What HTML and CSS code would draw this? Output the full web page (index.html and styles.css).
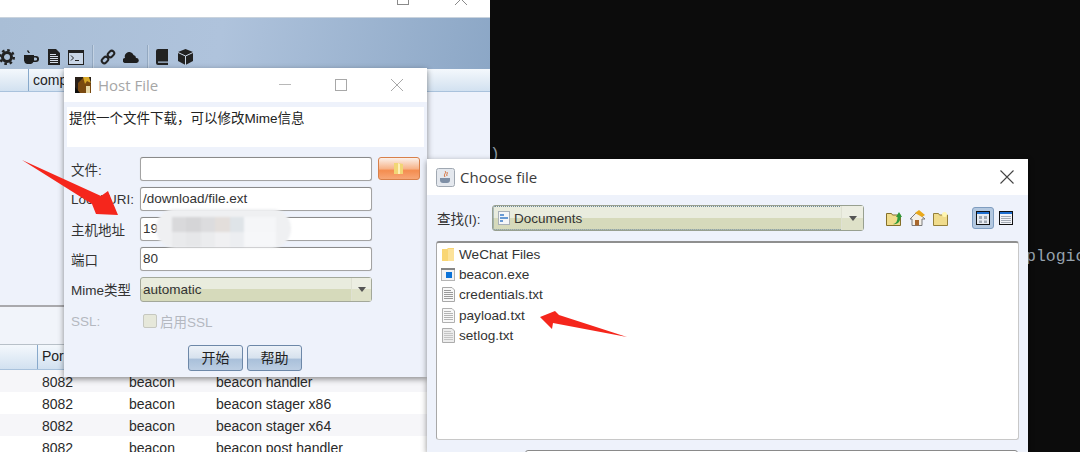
FILE: index.html
```html
<!DOCTYPE html>
<html lang="en">
<head>
    <meta charset="UTF-8">
    <title>Host File</title>
    <link rel="stylesheet" href="styles.css">
</head>
<body>

<div class="desktop">

    <!-- terminal behind everything -->
    <div class="terminal">
        <span class="term-brace">)</span>
        <span class="term-text">plogic</span>
    </div>

    <!-- main client window -->
    <div class="main-win">
        <div class="main-title">
            <svg class="wc-max" width="12" height="12" viewBox="0 0 12 12"><rect x="0.5" y="0.5" width="11" height="11" fill="none" stroke="#8a8a8a"/></svg>
            <svg class="wc-close" width="12" height="12" viewBox="0 0 12 12"><path d="M0 0L12 12M12 0L0 12" stroke="#8a8a8a"/></svg>
        </div>
        <div class="main-toolbar">
            <svg class="tool" width="16" height="16" viewBox="0 0 16 16"><circle cx="8" cy="8" r="4.500" fill="none" stroke="#222" stroke-width="3"/><circle cx="8" cy="8" r="6.800" fill="none" stroke="#222" stroke-width="2.400" stroke-dasharray="2.600 2.740"/></svg>
            <svg class="tool" width="16" height="16" viewBox="0 0 16 16"><path d="M1 6h10v1h2a2.400 2.400 0 0 1 0 6h-2.600a4 4 0 0 1-2.400 2H4a4 4 0 0 1-3-3.500zM11 8.500v3h1.600a1.500 1.500 0 0 0 0-3zM5 1l2 3H5.500L4 2z" fill="#1e1e1e"/></svg>
            <svg class="tool" width="13" height="16" viewBox="0 0 13 16"><path d="M1 0h8l4 4v12H1z" fill="#222"/><path d="M3 5.500h6M3 7.500h8M3 9.500h8M3 11.500h8M3 13.500h8" stroke="#d5dde8"/></svg>
            <svg class="tool" width="16" height="15" viewBox="0 0 16 15"><rect x="0.500" y="0.500" width="15" height="14" fill="#c9d6e6" stroke="#222"/><path d="M0 2h16" stroke="#222" stroke-width="2"/><path d="M3 5.500l2.500 2.500L3 10.500M7 10.500h4" stroke="#222" fill="none"/></svg>
            <span class="tool-sep"></span>
            <svg class="tool tool-link" width="16" height="16" viewBox="0 0 16 16"><g fill="none" stroke="#222" stroke-width="2"><rect x="-3.500" y="-2.500" width="7" height="5" rx="2.500" transform="translate(5 11) rotate(-45)"/><rect x="-3.500" y="-2.500" width="7" height="5" rx="2.500" transform="translate(11 5) rotate(-45)"/></g></svg>
            <svg class="tool tool-cloud" width="16" height="11" viewBox="0 0 16 11"><path d="M2.500 11a2.500 2.500 0 0 1-.500-5A4.500 4.500 0 0 1 10.500 3 3 3 0 0 1 13 6a2.500 2.500 0 0 1 .500 5z" fill="#1e1e1e"/></svg>
            <span class="tool-sep"></span>
            <svg class="tool" width="12" height="16" viewBox="0 0 12 16"><path d="M0 2a2 2 0 0 1 2-2h10v12.500H2v1.200h10V16H2a2 2 0 0 1-2-2z" fill="#222"/></svg>
            <svg class="tool tool-cube" width="15" height="16" viewBox="0 0 15 16"><path d="M7.500 0L15 3v9l-7.500 4L0 12V3z" fill="#222"/><path d="M0 3.500l7.500 3.500L15 3.500M7.500 7v9" stroke="#c9d6e6" fill="none"/></svg>
        </div>
        <div class="tbl-head top-head">
            <span class="th th-first"></span>
            <span class="th">comp</span>
        </div>
        <div class="upper-body"></div>
        <div class="tab-strip"></div>
        <div class="tbl-head low-head">
            <span class="th th-blank"></span>
            <span class="th">Por</span>
        </div>
        <div class="row"><span class="c-port">8082</span><span class="c-pay">beacon</span><span>beacon handler</span></div>
        <div class="row alt"><span class="c-port">8082</span><span class="c-pay">beacon</span><span>beacon stager x86</span></div>
        <div class="row"><span class="c-port">8082</span><span class="c-pay">beacon</span><span>beacon stager x64</span></div>
        <div class="row alt"><span class="c-port">8082</span><span class="c-pay">beacon</span><span>beacon post handler</span></div>
    </div>

    <!-- host file dialog -->
    <div class="dlg host-dlg">
        <div class="dlg-title host-title">
            <svg class="host-icon" width="16" height="16" viewBox="0 0 16 16"><rect width="16" height="16" fill="#2a2018"/><path d="M3 16V6l5-5 5 1 3 5v9z" fill="#7a4a10"/><path d="M8 0h6l2 6-4-2-2 3z" fill="#d8a828"/><path d="M11 9h4v7h-4z" fill="#e8d8a8"/><path d="M0 10l5 6H0z" fill="#0c0c0c"/></svg>
            <span class="host-name">Host File</span>
            <div class="win-btns">
                <svg width="12" height="12" viewBox="0 0 12 12"><path d="M0 5.500h12" stroke="#b8b8b8"/></svg>
                <svg width="12" height="12" viewBox="0 0 12 12"><rect x="0.500" y="0.500" width="11" height="11" fill="none" stroke="#a8a8a8"/></svg>
                <svg width="12" height="12" viewBox="0 0 12 12"><path d="M0 0L12 12M12 0L0 12" stroke="#a8a8a8"/></svg>
            </div>
        </div>
        <div class="host-body">
            <div class="info">提供一个文件下载，可以修改Mime信息</div>
            <div class="form">
                <label>文件:</label>
                <div class="field-wrap">
                    <span class="field"></span>
                    <span class="browse">
                        <svg width="12" height="11" viewBox="0 0 12 11"><path d="M1 0h4l5 1v10H1z" fill="#f2d675"/><path d="M5 0v11h2V1z" fill="#fff0b8"/></svg>
                    </span>
                </div>
                <label>Local URI:</label>
                <span class="field">/download/file.ext</span>
                <label>主机地址</label>
                <span class="field">19</span>
                <label>端口</label>
                <span class="field">80</span>
                <label>Mime类型</label>
                <span class="combo combo-small">automatic<span class="combo-btn"><i class="caret"></i></span></span>
                <label class="off ssl">SSL:</label>
                <span class="check-line off ssl"><i class="check"></i>启用SSL</span>
            </div>
            <div class="btn-row">
                <span class="btn">开始</span>
                <span class="btn">帮助</span>
            </div>
        </div>
    </div>

    <!-- blur that hides the host address -->
    <div class="smudge"></div>

    <!-- file chooser -->
    <div class="dlg choose-dlg">
        <div class="dlg-title choose-title">
            <svg width="19" height="19" viewBox="0 0 19 19"><rect x="0.500" y="0.500" width="18" height="18" rx="2" fill="#e4e8ee" stroke="#a0a8b2"/><path d="M9 3c2 2-2 3 0 6M11 4c1 2-1 2 0 4" stroke="#d8703a" fill="none"/><path d="M4 10h10v2a3 3 0 0 1-3 3H7a3 3 0 0 1-3-3z" fill="#7e8fa6"/></svg>
            <span class="choose-name">Choose file</span>
            <svg class="choose-close" width="14" height="14" viewBox="0 0 14 14"><path d="M0.500 0.500L13.500 13.500M13.500 0.500L0.500 13.500" stroke="#444" stroke-width="1.100"/></svg>
        </div>
        <div class="choose-body">
            <div class="look-row">
                <span class="look-label">查找(I):</span>
                <span class="combo combo-big">
                    <svg class="doc-ico" width="12" height="14" viewBox="0 0 12 14"><rect x="0.500" y="0.500" width="11" height="13" fill="#f4f6f8" stroke="#a8b0b8"/><path d="M2 4h4M2 7h8M2 10h3" stroke="#3a7cc8" stroke-width="1.500"/></svg>
                    Documents
                    <span class="combo-btn big-btn"><i class="caret"></i></span>
                </span>
                <div class="tools">
                    <svg width="16" height="15" viewBox="0 0 16 15"><path d="M.5 2.500h5l1 1.500h8v10.500H.5z" fill="#f0dc8c" stroke="#84702a"/><path d="M7 13c3.500-.500 4.500-3.500 4.500-7H10l3-5 3 5h-1.500c0 4.500-3 8-7.500 7z" fill="#2f9a3a"/></svg>
                    <svg width="17" height="16" viewBox="0 0 17 16"><path d="M8 2L1 9h2v6.500h10V9h3z" fill="#f4f0e8" stroke="#7a7a7a"/><path d="M6 3l4-3 6 5-3 2z" fill="#eaa91c"/><rect x="6" y="10" width="4" height="5.500" fill="#a8672c"/></svg>
                    <svg width="15" height="15" viewBox="0 0 15 15"><path d="M.5 2.500h5l1 1.500h8v10.500H.5z" fill="#f0dc8c" stroke="#94803a"/><circle cx="11.500" cy="3.500" r="2.500" fill="#fff6b0"/></svg>
                    <span class="view-on">
                        <svg width="14" height="14" viewBox="0 0 14 14"><rect x="0.500" y="0.500" width="13" height="13" fill="#e8ecf2" stroke="#111"/><rect x="1" y="1" width="12" height="2" fill="#1f6fd0"/><path d="M3 5h3v3H3zM8 5h3v3H8zM3 9.500h3v2.500H3zM8 9.500h3v2.500H8z" fill="#a2aab4"/></svg>
                    </span>
                    <svg class="view-list" width="14" height="14" viewBox="0 0 14 14"><rect x="0.500" y="0.500" width="13" height="13" fill="#f2f4f8" stroke="#111"/><rect x="1" y="1" width="12" height="2" fill="#1f6fd0"/><path d="M2 5.500h10M2 7.500h10M2 9.500h10M2 11.500h10" stroke="#a4abb4"/></svg>
                </div>
            </div>
            <div class="file-list">
                <div class="file"><svg class="ico-dir" width="14" height="13" viewBox="0 0 14 13"><path d="M1 1h5l1-1h6v13H1z" fill="#f9d675"/><path d="M7 1h6v12H7z" fill="#fce29a"/></svg>WeChat Files</div>
                <div class="file"><svg width="14" height="13" viewBox="0 0 14 13"><rect x="0.500" y="0.500" width="13" height="12" fill="#f2f2f4" stroke="#b4b4b4"/><rect x="0" y="0" width="14" height="2" fill="#868686"/><rect x="5" y="4" width="6" height="6" fill="#0b72d8"/></svg>beacon.exe</div>
                <div class="file"><svg width="14" height="15" viewBox="0 0 14 15"><path d="M1.500 .5H11L13.500 3V14.500H1.500z" fill="#f8f8f8" stroke="#a8a8a8"/><path d="M3 3.500h7M3 5.500h9M3 7.500h9M3 9.500h9M3 11.500h9" stroke="#9a9a9a"/></svg>credentials.txt</div>
                <div class="file"><svg width="14" height="15" viewBox="0 0 14 15"><path d="M1.500 .5H11L13.500 3V14.500H1.500z" fill="#f8f8f8" stroke="#b0b0b0"/><path d="M3 3.500h7M3 5.500h9M3 7.500h9M3 9.500h9M3 11.500h9" stroke="#b4b4b4"/></svg>payload.txt</div>
                <div class="file"><svg width="14" height="15" viewBox="0 0 14 15"><path d="M1.500 .5H11L13.500 3V14.500H1.500z" fill="#ececec" stroke="#acacac"/><path d="M3 3.500h7M3 5.500h9M3 7.500h9M3 9.500h9M3 11.500h9" stroke="#c4c4c4"/></svg>setlog.txt</div>
            </div>
            <div class="name-field"></div>
        </div>
    </div>

    <!-- red arrows drawn over the screenshot -->
    <svg class="arrows" width="1080" height="452" viewBox="0 0 1080 452">
        <path d="M22 160L101 196 108 191 118 215 96 214 92 204z" fill="#f5261c"/>
        <path d="M540 317L555 311 559 315 627 337 553 323 552 329z" fill="#f5261c"/>
    </svg>

</div>

</body>
</html>
```

FILE: styles.css
```css
* {
    box-sizing: border-box;
}

html, body {
    margin: 0;
    padding: 0;
}

body {
    font-family: "Liberation Sans", "Noto Sans CJK SC", sans-serif;
    font-size: 14px;
    color: #222;
}

.desktop {
    position: relative;
    width: 1080px;
    height: 452px;
    overflow: hidden;
    background: #0c0c0c;
}

/* terminal */
.term-brace {
    position: absolute;
    left: 490px;
    top: 146px;
    font-family: "Liberation Mono", monospace;
    font-size: 16px;
    color: #8d99a3;
}

.term-text {
    position: absolute;
    left: 1026px;
    top: 247px;
    font-family: "Liberation Mono", monospace;
    font-size: 16.500px;
    color: #97a3ae;
}

/* main window */
.main-win {
    position: absolute;
    left: 0;
    top: 0;
    width: 490px;
    height: 452px;
    background: #eef2fb;
    display: flex;
    flex-direction: column;
}

.main-title {
    height: 18px;
    flex: none;
    background: #fff;
    border-bottom: 1px solid #c9d3dd;
    position: relative;
    overflow: hidden;
}

.wc-max {
    position: absolute;
    left: 397px;
    top: -7px;
}

.wc-close {
    position: absolute;
    left: 455px;
    top: -7px;
}

.main-toolbar {
    height: 51px;
    flex: none;
    background: linear-gradient(100deg, #a9bed6 0%, #afc3dc 45%, #8ca7c6 100%);
    display: flex;
    align-items: center;
    gap: 8px;
    padding: 27px 0 0 0;
    margin-left: -1px;
}

.tool {
    flex: none;
}

.tool-link, .tool-cloud {
    margin-left: -1px;
}

.tool-cube {
    margin-left: 2px;
}

.tool-sep {
    width: 1px;
    height: 24px;
    background: #93a8c0;
    box-shadow: 1px 0 0 #c3d2e3;
}

.tbl-head {
    flex: none;
    height: 23px;
    display: flex;
    background: linear-gradient(#f4f8fc, #d2e1f0);
    border-bottom: 1px solid #a9c2dc;
    font-size: 14px;
    line-height: 22px;
}

.th {
    padding-left: 4px;
    border-left: 1px solid #88a9cb;
    flex: 1;
}

.th-first {
    flex: none;
    width: 28px;
    border-left: 0;
}

.th-blank {
    flex: none;
    width: 37px;
    border-left: 0;
}

.upper-body {
    height: 215px;
    flex: none;
    border-bottom: 2px solid #a9a9ad;
}

.tab-strip {
    height: 38px;
    flex: none;
    background: #f1f4fa;
    border-bottom: 1px solid #b8c0c8;
}

.low-head {
    height: 25px;
}

.row {
    flex: none;
    height: 22px;
    padding-top: 1px;
    display: flex;
    align-items: center;
    background: #f6f6f9;
    font-size: 14px;
    color: #2a2a2a;
}

.row.alt {
    background: #fff;
}

.c-port {
    margin-left: 42px;
    width: 87px;
}

.c-pay {
    width: 87px;
}

/* dialogs */
.dlg {
    position: absolute;
    box-shadow: 0 2px 6px rgba(0, 0, 0, .45);
    background: #eef2fb;
}

.dlg-title {
    display: flex;
    align-items: center;
    background: #fff;
}

.host-dlg {
    left: 64px;
    top: 68px;
    width: 363px;
    height: 309px;
}

.host-title {
    height: 34px;
    padding-left: 11px;
}

.host-name {
    margin-left: 7px;
    font-family: "Open Sans", sans-serif;
    font-size: 15px;
    color: #a6a6a6;
}

.win-btns {
    display: flex;
    gap: 44px;
    margin-left: auto;
    margin-right: 24px;
}

.host-body {
    padding: 5px 3px 0;
    height: 275px;
    display: flex;
    flex-direction: column;
}

.info {
    height: 40px;
    background: #fff;
    padding: 3px 0 0 2px;
    font-size: 13.500px;
    line-height: 18px;
}

.form {
    display: grid;
    grid-template-columns: 69px 232px;
    grid-auto-rows: 30px;
    align-items: center;
    margin-top: 7px;
    padding-left: 4px;
    font-size: 13.500px;
}

.form label {
    color: #333;
    white-space: nowrap;
}

.form .off {
    color: #b4b8c0;
}

.form .ssl {
    margin-top: 4px;
}

.field-wrap {
    display: flex;
    gap: 6px;
    width: 280px;
}

.field {
    display: block;
    flex: none;
    width: 232px;
    height: 24px;
    background: #fff;
    border: 1px solid #a3a3a3;
    border-top-color: #8a8a8a;
    border-radius: 3px;
    padding-left: 2px;
    font-size: 13.500px;
    line-height: 22px;
    color: #333;
    box-shadow: 0 0 1px #c8c8c8;
}

.browse {
    flex: none;
    width: 42px;
    height: 23px;
    display: flex;
    align-items: center;
    justify-content: center;
    border: 1px solid #d8804a;
    border-radius: 3px;
    background: linear-gradient(#fbf1ea, #f7b48a 50%, #f48d50 60%, #f7a777);
}

.combo {
    display: flex;
    align-items: center;
    position: relative;
    height: 25px;
    background: linear-gradient(#e9ecde 50%, #d6dabb 50%);
    border: 1px solid #a3a89a;
    border-radius: 3px;
    padding-left: 2px;
    font-size: 13.500px;
    color: #333;
}

.combo-btn {
    position: absolute;
    right: 0;
    top: 0;
    bottom: 0;
    width: 20px;
    display: flex;
    align-items: center;
    justify-content: center;
    background: linear-gradient(#eceee2 50%, #dee1c8 50%);
    border-left: 1px solid #dfe1d3;
}

.caret {
    border: 4px solid transparent;
    border-top: 5px solid #555;
    border-bottom: 0;
}

.check-line {
    display: flex;
    align-items: center;
    gap: 3px;
    padding-left: 3px;
    font-size: 13.500px;
    color: #b4b8c0;
}

.check {
    width: 14px;
    height: 14px;
    background: #e6e8da;
    border: 1px solid #c6c8c0;
    border-radius: 2px;
}

.btn-row {
    display: flex;
    justify-content: center;
    gap: 4px;
    margin-top: 11px;
    padding-right: 1px;
}

.btn {
    width: 55px;
    height: 26px;
    text-align: center;
    line-height: 24px;
    font-size: 14px;
    color: #222;
    border: 1px solid #6d88a8;
    border-radius: 3px;
    background: linear-gradient(#edf2f8, #d7e2ee 50%, #a9c0da 55%, #bccee3);
}

/* the smudge over the ip, tiles are the pixelated part */
.smudge {
    position: absolute;
    left: 156px;
    top: 209px;
    width: 135px;
    height: 39px;
    border-radius: 19px;
    filter: blur(1px);
    background-color: #eff0f2;
    background-repeat: no-repeat;
    background-image:
        linear-gradient(to right, #d9d9db 14px, #d5d5d7 14px 29px, #dcdcde 29px 43px, #e3dedb 43px 58px, #dfe4e8 58px 72px, #f5f6f8 72px),
        linear-gradient(to right, #e9eaec 14px, #e6e7e9 14px 29px, #ebecee 29px 43px, #f0f0f2 43px 58px, #eceef1 58px 72px, #f6f7f9 72px);
    background-size: 104px 15px, 104px 15px;
    background-position: 16px 8px, 16px 23px;
}

/* file chooser */
.choose-dlg {
    left: 427px;
    top: 159px;
    width: 601px;
    height: 293px;
}

.choose-title {
    height: 36px;
    padding-left: 9px;
    position: relative;
}

.choose-name {
    margin-left: 5px;
    font-family: "Open Sans", sans-serif;
    font-size: 15px;
    color: #3c3c3c;
}

.choose-close {
    position: absolute;
    right: 14px;
    top: 11px;
}

.choose-body {
    padding: 10px 10px 0 9px;
}

.look-row {
    display: flex;
    align-items: center;
    height: 26px;
}

.look-label {
    width: 56px;
    flex: none;
    padding-left: 1px;
    font-size: 13.500px;
    color: #333;
}

.combo-big {
    width: 372px;
    height: 26px;
    border: 1px solid #98a090;
    outline: 1px dotted #6f8a9a;
    outline-offset: -2px;
    padding-left: 5px;
    gap: 4px;
}

.big-btn {
    width: 22px;
}

.tools {
    display: flex;
    align-items: center;
    gap: 7px;
    margin-left: 22px;
}

.view-on {
    display: flex;
    padding: 3px;
    margin-left: 17px;
    background: #b3c8e0;
    border: 1px solid #7f9dc0;
    border-radius: 3px;
}

.view-list {
    margin-left: -2px;
}

.file-list {
    margin-top: 10px;
    width: 583px;
    height: 199px;
    background: #fff;
    border: 1px solid #c8c8c8;
    border-top: 2px solid #8f8f8f;
    border-left-color: #a8a8a8;
    border-radius: 3px;
    padding: 1px 0 0 4px;
}

.file {
    display: flex;
    align-items: center;
    gap: 4px;
    height: 20.400px;
    font-size: 13.600px;
    color: #333;
}

.file svg {
    flex: none;
}

.name-field {
    width: 493px;
    height: 20px;
    margin: 10px 0 0 89px;
    background: #fff;
    border: 1px solid #8a8a8a;
    border-radius: 3px;
}

.arrows {
    position: absolute;
    left: 0;
    top: 0;
}
```
